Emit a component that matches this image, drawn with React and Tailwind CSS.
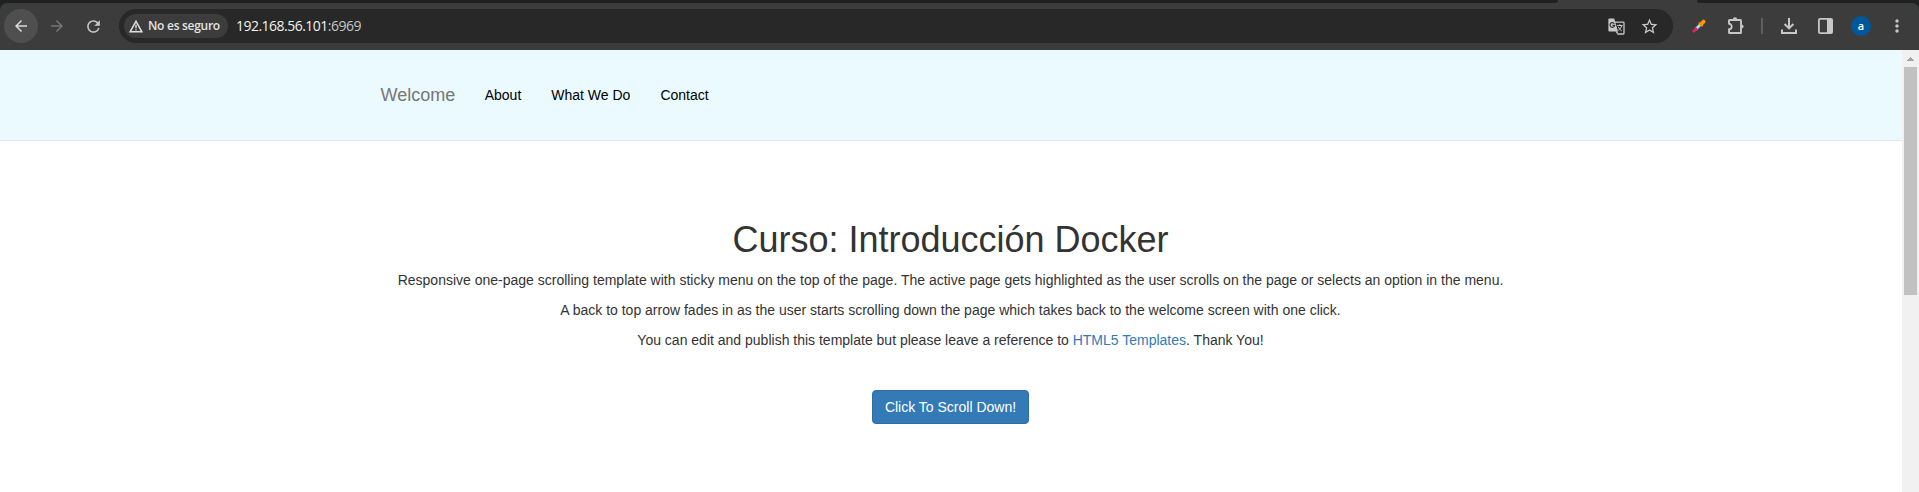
import React from "react";
import { MdArrowBack, MdArrowForward, MdRefresh, MdStarBorder, MdMoreVert } from "react-icons/md";

function WarningIcon() {
  return (
    <svg width="14" height="13" viewBox="0 0 14 13" fill="none" stroke="#dedede" className="shrink-0">
      <path d="M7 1.3 L12.9 11.8 H1.1 Z" strokeWidth="1.5" />
      <path d="M7 4.8 V8.2 M7 9.2 V10.6" strokeWidth="1.4" />
    </svg>
  );
}

function TranslateIcon() {
  return (
    <svg width="17" height="17" viewBox="0 0 17 17" fill="none" className="shrink-0">
      <path d="M7 4.1 H15.2 Q16 4.1 16 4.9 V15.2 Q16 16 15.2 16 H9.4" stroke="#c7c7c7" strokeWidth="1.3" />
      <path d="M1.3 0.5 H6.2 L10 13.4 H1.3 Q0.4 13.4 0.4 12.5 V1.4 Q0.4 0.5 1.3 0.5 Z" fill="#c7c7c7" />
      <path d="M7.6 13.4 H10.2 L9.2 16.3 Z" fill="#c7c7c7" />
      <path d="M6.3 5.8 A2.3 2.3 0 1 0 6.6 7.4 H4.5" stroke="#333" strokeWidth="1.2" />
      <path d="M9.2 7.5 H14.6 M11.8 6.2 V7.5 M13.8 7.7 Q13 10.8 10.3 12.3 M10.2 8.8 Q11.4 11.2 13.8 13" stroke="#c7c7c7" strokeWidth="1" />
    </svg>
  );
}

function DropperIcon() {
  return (
    <svg width="16" height="16" viewBox="0 0 16 16" className="shrink-0">
      <path d="M4.6 11.4 L9.4 6.6" stroke="#a9d4f7" strokeWidth="2.8" />
      <path d="M2.8 13.2 L5 11" stroke="#e91e63" strokeWidth="2.8" strokeLinecap="round" />
      <path d="M7.8 4.6 L11.6 8.4" stroke="#f57c00" strokeWidth="1.8" />
      <path d="M10.4 5.8 L12.6 3.6" stroke="#ff9800" strokeWidth="3.8" strokeLinecap="round" />
    </svg>
  );
}

function PuzzleIcon() {
  return (
    <svg width="18" height="18" viewBox="0 0 18 18" className="shrink-0">
      <path
        d="M2 3.6 Q2 3 2.6 3 H13.4 Q14 3 14 3.6 V15.4 Q14 16 13.4 16 H2.6 Q2 16 2 15.4 V12.2 A2.7 2.7 0 0 0 2 6.8 Z"
        fill="none"
        stroke="#c7c7c7"
        strokeWidth="1.9"
        strokeLinejoin="round"
      />
      <path d="M5.8 2.5 A2.1 2.1 0 0 1 10.2 2.5 Z M14.5 7.4 A2.1 2.1 0 0 1 14.5 11.6 Z" fill="#c7c7c7" />
    </svg>
  );
}

function DownloadIcon() {
  return (
    <svg width="16" height="16" viewBox="0 0 16 16" fill="none" stroke="#c7c7c7" strokeWidth="2" className="shrink-0">
      <path d="M8 0 V10 M3.6 6 L8 10.4 L12.4 6 M1 11.5 V15 H15 V11.5" />
    </svg>
  );
}

function SidePanelIcon() {
  return (
    <svg width="15" height="16" viewBox="0 0 15 16" className="shrink-0">
      <rect x="0.9" y="0.9" width="13.2" height="14.2" rx="1.2" fill="none" stroke="#c7c7c7" strokeWidth="1.8" />
      <path d="M9 1 H14 V15 H9 Z" fill="#c7c7c7" />
    </svg>
  );
}

function Browser() {
  return (
    <header className="h-[50px] shrink-0 bg-[#1f2020]">
      <div className="flex h-[3px] bg-[#3c3c3c]">
        <div className="w-[1558px] rounded-br-[3px] bg-[#1f2020]" />
        <div className="w-[139px]" />
        <div className="flex-1 rounded-bl-[3px] bg-[#1f2020]" />
      </div>
      <div className="flex h-[47px] items-center rounded-t-[7px] bg-[#3c3c3c] pb-px pl-1">
        <div className="flex size-[34px] items-center justify-center rounded-full bg-[#4f4f4f]">
          <MdArrowBack size={18} color="#dadada" />
        </div>
        <div className="ml-0.5 flex size-[34px] items-center justify-center">
          <MdArrowForward size={18} color="#757575" />
        </div>
        <div className="ml-0.5 flex size-[34px] items-center justify-center">
          <MdRefresh size={19} color="#c7c7c7" />
        </div>
        <div className="ml-[9px] flex h-[34px] w-[1554px] items-center rounded-full bg-[#282828] pl-[5px]">
          <div className="flex h-6 w-[104px] items-center gap-[5px] rounded-full bg-[#3c3c3c] pl-[5px]">
            <WarningIcon />
            <span className="whitespace-nowrap font-['Open_Sans',sans-serif] text-[12px] font-semibold leading-4 tracking-[-0.28px] text-[#e3e3e3]">No es seguro</span>
          </div>
          <div className="ml-2 flex-1 whitespace-nowrap font-['Open_Sans',sans-serif] text-[14px] leading-5 tracking-[-0.52px] text-[#f0f0f0]">
            192.168.56.101<span className="text-[#c7c7c7]">:6969</span>
          </div>
          <TranslateIcon />
          <MdStarBorder size={19} color="#c7c7c7" className="ml-[15px] mr-[14px]" />
        </div>
        <div className="ml-2 flex w-9 items-center justify-center"><DropperIcon /></div>
        <div className="flex w-9 items-center justify-center pl-0.5"><PuzzleIcon /></div>
        <div className="ml-2 h-4 w-0.5 bg-[#5e5e5e]" />
        <div className="ml-2 flex w-9 items-center justify-center"><DownloadIcon /></div>
        <div className="flex w-9 items-center justify-center"><SidePanelIcon /></div>
        <div className="flex w-9 items-center justify-center">
          <span className="flex size-5 items-center justify-center rounded-full bg-[#01579b] pb-px font-['Open_Sans',sans-serif] text-[11px] font-semibold leading-none text-white">a</span>
        </div>
        <div className="flex w-9 items-center justify-center"><MdMoreVert size={20} color="#c7c7c7" /></div>
      </div>
    </header>
  );
}

function Page() {
  return (
    <main className="flex min-w-0 flex-1 flex-col bg-white">
      <nav className="h-[91px] border-b border-[#e7e7e7] bg-[#eafaff]">
        <div className="mx-auto flex h-[90px] w-[1170px] items-center pl-[14.5px] text-[14px] leading-5 text-black">
          <a className="text-[18px] text-[#777]">Welcome</a>
          <a className="ml-[29.5px]">About</a>
          <a className="ml-[30px]">What We Do</a>
          <a className="ml-[30px]">Contact</a>
        </div>
      </nav>
      <section className="flex flex-col items-center pr-px pt-[79px] text-center text-[14px] leading-5 text-[#333]">
        <h1 className="mb-2.5 text-[36px] leading-10">Curso: Introducción Docker</h1>
        <p className="mb-2.5">Responsive one-page scrolling template with sticky menu on the top of the page. The active page gets highlighted as the user scrolls on the page or selects an option in the menu.</p>
        <p className="mb-2.5">A back to top arrow fades in as the user starts scrolling down the page which takes back to the welcome screen with one click.</p>
        <p>You can edit and publish this template but please leave a reference to <a className="text-[#337ab7]">HTML5 Templates</a>. Thank You!</p>
        <button className="mt-10 h-[34px] w-[157px] rounded border border-[#2e6da4] bg-[#337ab7] text-white">Click To Scroll Down!</button>
      </section>
    </main>
  );
}

export default function App() {
  return (
    <div className="flex h-[492px] w-[1919px] flex-col overflow-hidden font-['Liberation_Sans',Arial,sans-serif]">
      <Browser />
      <div className="flex min-h-0 flex-1">
        <Page />
        <aside className="flex w-[17px] flex-col items-center bg-[#f1f1f1]">
          <div className="flex h-[17px] items-center justify-center">
            <svg width="7" height="4" viewBox="0 0 7 4" shapeRendering="crispEdges"><path d="M3 0h1v1h1v1h1v1h1v1H0V3h1V2h1V1h1Z" fill="#a3a3a3" /></svg>
          </div>
          <div className="h-[228px] w-[13px] bg-[#c1c1c1]" />
        </aside>
      </div>
    </div>
  );
}
